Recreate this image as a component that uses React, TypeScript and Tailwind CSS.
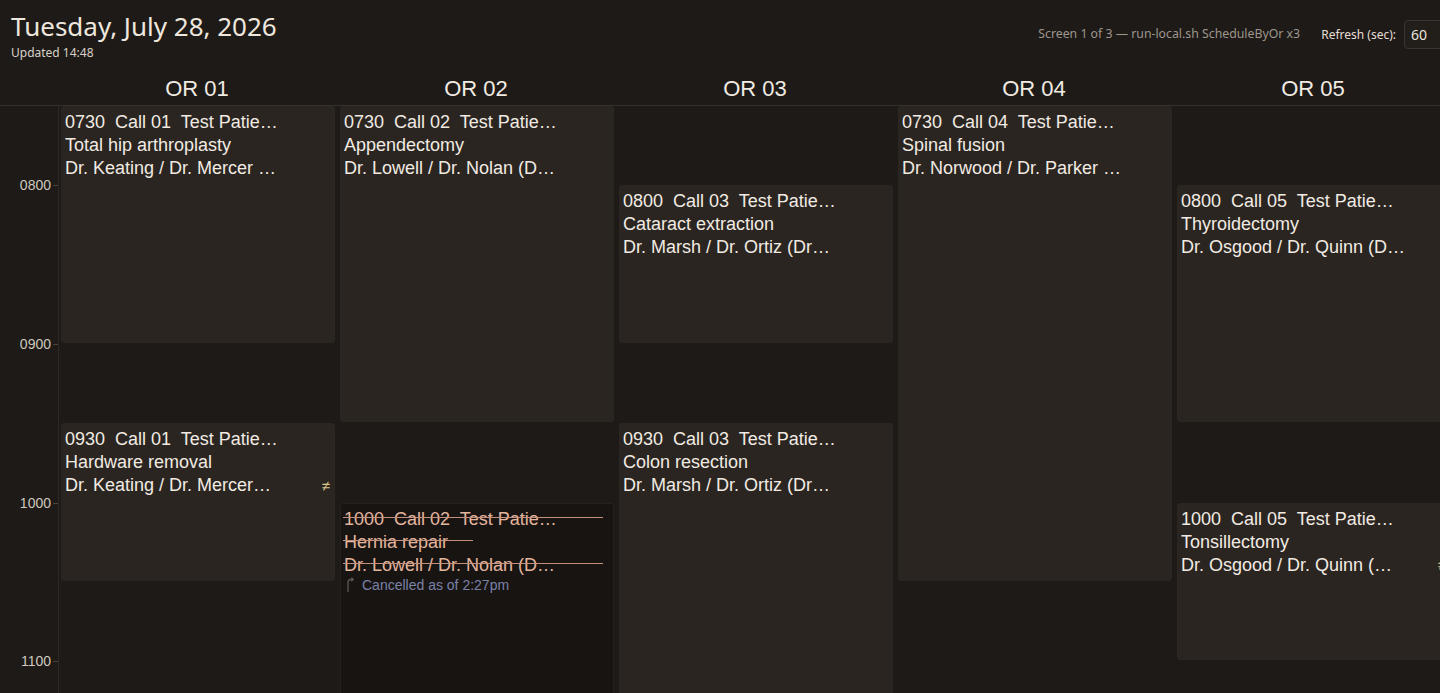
import React from "react";

const HOUR = 158.67;
const T0 = 7.5;
const t = (s: string) => parseInt(s.slice(0, 2), 10) + parseInt(s.slice(2), 10) / 60;

type Ev = {
  s: string;
  e: string;
  call: string;
  proc: string;
  docs: string;
  ne?: boolean;
  cancelled?: string;
};

const ORS: { name: string; events: Ev[] }[] = [
  {
    name: "OR 01",
    events: [
      { s: "0730", e: "0900", call: "01", proc: "Total hip arthroplasty", docs: "Dr. Keating / Dr. Mercer …" },
      { s: "0930", e: "1030", call: "01", proc: "Hardware removal", docs: "Dr. Keating / Dr. Mercer…", ne: true },
    ],
  },
  {
    name: "OR 02",
    events: [
      { s: "0730", e: "0930", call: "02", proc: "Appendectomy", docs: "Dr. Lowell / Dr. Nolan (D…" },
      {
        s: "1000",
        e: "1130",
        call: "02",
        proc: "Hernia repair",
        docs: "Dr. Lowell / Dr. Nolan (D…",
        cancelled: "Cancelled as of 2:27pm",
      },
    ],
  },
  {
    name: "OR 03",
    events: [
      { s: "0800", e: "0900", call: "03", proc: "Cataract extraction", docs: "Dr. Marsh / Dr. Ortiz (Dr…" },
      { s: "0930", e: "1130", call: "03", proc: "Colon resection", docs: "Dr. Marsh / Dr. Ortiz (Dr…" },
    ],
  },
  {
    name: "OR 04",
    events: [{ s: "0730", e: "1030", call: "04", proc: "Spinal fusion", docs: "Dr. Norwood / Dr. Parker …" }],
  },
  {
    name: "OR 05",
    events: [
      { s: "0800", e: "0930", call: "05", proc: "Thyroidectomy", docs: "Dr. Osgood / Dr. Quinn (D…" },
      { s: "1000", e: "1100", call: "05", proc: "Tonsillectomy", docs: "Dr. Osgood / Dr. Quinn (…", ne: true },
    ],
  },
];

const HOURS = ["0800", "0900", "1000", "1100"];

function Struck({ text, wide }: { text: string; wide: boolean }) {
  return (
    <div className="relative whitespace-pre">
      {text}
      <span
        className={
          wide
            ? "absolute left-[-1px] top-[9px] h-[1.5px] w-[260px] bg-[#c2907b]"
            : "absolute left-[-1px] top-[9px] h-[1.5px] w-[130px] bg-[#c2907b]"
        }
      />
    </div>
  );
}

function Card({ ev }: { ev: Ev }) {
  const top = (t(ev.s) - T0) * HOUR;
  const height = (t(ev.e) - t(ev.s)) * HOUR - 1;
  const line1 = `${ev.s}  Call ${ev.call}  Test Patie…`;

  if (ev.cancelled) {
    return (
      <div
        className="absolute left-[2px] w-[274px] overflow-hidden rounded-[3px] border border-[#26211c] bg-[#181412] px-[3px] pt-[4px] font-['Liberation_Sans',Arial,sans-serif] text-[18px] leading-[23px] text-[#e3b59e]"
        style={{ top, height }}
      >
        <Struck text={line1} wide />
        <Struck text={ev.proc} wide={false} />
        <Struck text={ev.docs} wide />
        <div className="flex items-center gap-[8px] pl-[2px] text-[14px] leading-[16px] text-[#7a82a8]">
          <svg width="8" height="15" viewBox="0 0 8 15" fill="none" stroke="#5d5751" strokeWidth="1.3">
            <path d="M2 15 V5 Q2 2.5 4.5 2.5 H7" />
            <path d="M5.3 0.8 L7.2 2.5 L5.3 4.2" />
          </svg>
          <span>{ev.cancelled}</span>
        </div>
      </div>
    );
  }

  return (
    <div
      className="absolute left-[2px] w-[274px] overflow-hidden rounded-[3px] border border-[#2b2620] bg-[#2a2520] px-[3px] pt-[4px] font-['Liberation_Sans',Arial,sans-serif] text-[18px] leading-[23px] text-[#f1ebe3]"
      style={{ top, height }}
    >
      <div className="whitespace-pre">{line1}</div>
      <div className="whitespace-pre">{ev.proc}</div>
      <div className="flex items-center justify-between">
        <span className="whitespace-pre">{ev.docs}</span>
        {ev.ne && <span className="pr-[1px] text-[15px] leading-[16px] text-[#dcc688]">≠</span>}
      </div>
    </div>
  );
}

export default function App() {
  return (
    <div className="h-[693px] w-[1440px] overflow-hidden bg-[#1e1a17] font-['Noto_Sans',sans-serif] text-[#ede6dd]">
      <div className="w-[1454px]">
        <header className="flex h-[69px] justify-between pl-[11px]">
          <div className="pt-[10px]">
            <h1 className="text-[26px] font-normal leading-[32px] text-[#eee7de]">Tuesday, July 28, 2026</h1>
            <div className="mt-[3px] text-[12px] leading-[16px] text-[#d8d1c8]">Updated 14:48</div>
          </div>
          <div className="mt-[20px] flex h-[29px] items-center">
            <span className="text-[12.3px] text-[#9d968d]">Screen 1 of 3 — run-local.sh ScheduleByOr x3</span>
            <span className="ml-[21px] text-[12px] text-[#e6dfd6]">Refresh (sec):</span>
            <input
              readOnly
              defaultValue="60"
              className="ml-[8px] h-[29px] w-[50px] rounded-[4px] border border-[#3a352e] bg-[#221e1a] pl-[6px] text-[14px] text-[#ece5dc] outline-none"
            />
          </div>
        </header>

        <div className="flex h-[37px] border-b border-[#35302a]">
          <div className="w-[59px] shrink-0" />
          {ORS.map((o) => (
            <div
              key={o.name}
              className="flex w-[279px] shrink-0 items-center justify-center pt-[2px] pr-[3px] font-['Liberation_Sans',Arial,sans-serif] text-[22px] text-[#f1ebe3]"
            >
              {o.name}
            </div>
          ))}
        </div>

        <div className="flex h-[600px]">
          <div className="relative w-[59px] shrink-0 border-r border-[#2d2824]">
            {HOURS.map((h) => {
              const y = (t(h) - T0) * HOUR;
              return (
                <React.Fragment key={h}>
                  <div
                    className="absolute right-[7px] -translate-y-1/2 font-['Liberation_Sans',Arial,sans-serif] text-[14px] leading-[16px] text-[#cfc8bf]"
                    style={{ top: y }}
                  >
                    {h}
                  </div>
                  <div className="absolute right-0 h-px w-[5px] bg-[#4a443d]" style={{ top: y }} />
                </React.Fragment>
              );
            })}
          </div>
          {ORS.map((o) => (
            <div key={o.name} className="relative w-[279px] shrink-0">
              {o.events.map((ev) => (
                <Card key={ev.s} ev={ev} />
              ))}
            </div>
          ))}
        </div>
      </div>
    </div>
  );
}
